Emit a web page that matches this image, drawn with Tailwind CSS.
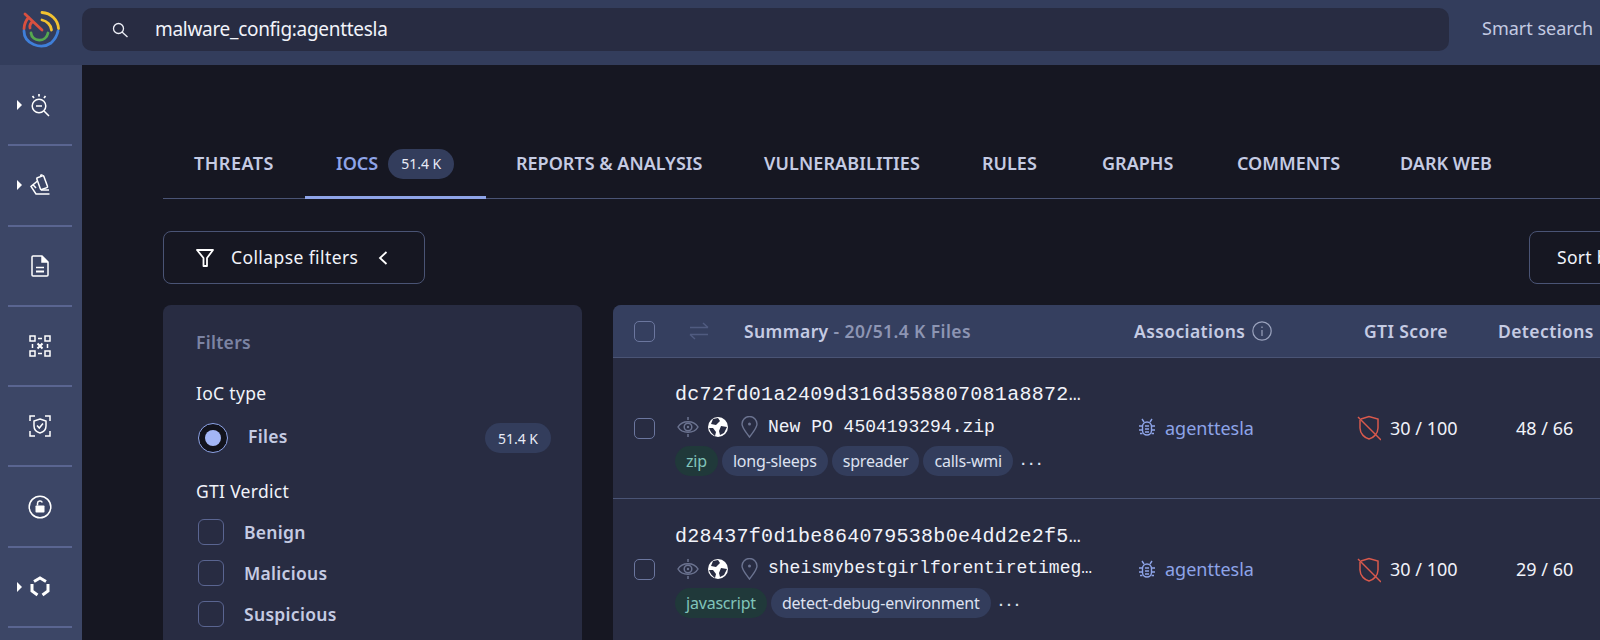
<!DOCTYPE html>
<html lang="en">
<head>
    <meta charset="UTF-8" />
    <title>IOCs | malware_config:agenttesla</title>
    <script src="https://cdn.jsdelivr.net/npm/@tailwindcss/browser@4"></script>
</head>
<body class="h-[640px] w-[1600px] overflow-hidden bg-[#161722] font-['Noto_Sans',sans-serif]">
    <!-- Top bar -->
    <header class="flex h-[65px] items-start bg-[#333d5c]">
        <div class="mt-[9px] flex w-[82px] shrink-0 justify-center">
            <svg width="40" height="40" viewBox="20 9 40 40" fill="none" stroke-width="2.8" stroke-linecap="round">
                <path d="M27.500 17.500 A18 18 0 0 0 23 29" stroke="#d9503f"/>
                <path d="M24 14 L41 30 M32 21.500 C29.500 23 28.500 25.500 29 28" stroke="#d9503f"/>
                <path d="M41 12.500 C50 13 57 20 57.500 28.500" stroke="#f2c230"/>
                <path d="M41 20 C46 21 50 25 50.500 30" stroke="#f2c230"/>
                <path d="M30 33 C31 42 45 43 47 33" stroke="#56a94f"/>
                <path d="M23 31 C23 44 40 50 50 43" stroke="#3f7fd9"/>
                <path d="M51 42 C54 39 56 36 57 31" stroke="#3f7fd9"/>
            </svg>
        </div>
        <div class="mt-[8px] flex h-[43px] w-[1367px] shrink-0 items-center rounded-[10px] bg-[#282c42] pl-[30px]">
            <svg width="16" height="16" viewBox="0 0 16 16" fill="none" stroke="#eef0f7" stroke-width="1.300">
                <circle cx="6.500" cy="6.500" r="5"/>
                <path d="M10 10 L15.500 15"/>
            </svg>
            <span class="ml-[27px] text-[19px] tracking-[-0.3px] text-[#f1f3fa]">malware_config:agenttesla</span>
        </div>
        <span class="ml-[33px] mt-[15px] whitespace-nowrap text-[18px] text-[#c3cae2]">Smart search</span>
    </header>

    <div class="flex h-[575px]">
        <!-- Left rail -->
        <aside class="flex w-[82px] shrink-0 flex-col bg-[#3c4666] pl-[8px] pr-[10px] pt-[1px]">
            <div class="relative flex h-[80.3px] shrink-0 items-center justify-center border-b-2 border-[#5a6591]">
                <span class="absolute left-[9px] top-[34px] h-0 w-0 border-y-[5px] border-l-[5px] border-y-transparent border-l-white"></span>
                <svg width="20" height="24" viewBox="0 0 20 24" fill="none" stroke="white" stroke-width="1.500">
                    <circle cx="9" cy="13" r="6.800"/><path d="M6 13 H12 M14 18 L19 23"/>
                    <path d="M9 1 V3.500 M2.500 3 L4 5 M15.500 3 L14 5" stroke-width="1.700"/>
                </svg>
            </div>
            <div class="relative flex h-[80.3px] shrink-0 items-center justify-center border-b-2 border-[#5a6591]">
                <span class="absolute left-[9px] top-[34px] h-0 w-0 border-y-[5px] border-l-[5px] border-y-transparent border-l-white"></span>
                <svg width="20" height="22" viewBox="0 0 20 22" fill="none" stroke="white" stroke-width="1.500">
                    <rect x="8.500" y="2.500" width="7.500" height="12.500" rx="1" transform="rotate(-20 12 9)"/>
                    <path d="M10 1.500 L12.500 0.800"/>
                    <path d="M7.500 7 L1 12.500 L6 20 H19.500"/>
                    <path d="M3 10.800 L6 14 M11 16 L19 16"/>
                </svg>
            </div>
            <div class="flex h-[80.3px] shrink-0 items-center justify-center border-b-2 border-[#5a6591]">
                <svg width="18" height="22" viewBox="0 0 18 22" fill="none" stroke="white" stroke-width="1.500">
                    <path d="M2 1 H11 L17 7 V20 A1 1 0 0 1 16 21 H2 A1 1 0 0 1 1 20 V2 A1 1 0 0 1 2 1 Z"/>
                    <path d="M11 1 V7 H17" fill="white"/>
                    <path d="M5 12.500 H13"/><path d="M5 16.500 H13" stroke-width="2"/>
                </svg>
            </div>
            <div class="flex h-[80.3px] shrink-0 items-center justify-center border-b-2 border-[#5a6591]">
                <svg width="22" height="22" viewBox="0 0 22 22" fill="none" stroke="white" stroke-width="1.500">
                    <rect x="1" y="1" width="5" height="5"/><rect x="16" y="1" width="5" height="5"/>
                    <rect x="1" y="16" width="5" height="5"/><rect x="16" y="16" width="5" height="5"/>
                    <path d="M9 3.500 H13 M9 18.500 H13 M3.500 9 V13 M18.500 9 V13"/>
                    <path d="M8.500 8.500 L13.500 13.500 M13.500 8.500 L8.500 13.500" stroke-width="2"/>
                </svg>
            </div>
            <div class="flex h-[80.3px] shrink-0 items-center justify-center border-b-2 border-[#5a6591]">
                <svg width="22" height="22" viewBox="0 0 22 22" fill="none" stroke="white" stroke-width="1.500">
                    <path d="M1 6 V1 H6 M16 1 H21 V6 M21 16 V21 H16 M6 21 H1 V16"/>
                    <path d="M11 4 L17 6 V11 C17 14.500 14.500 17 11 18 C7.500 17 5 14.500 5 11 V6 Z"/>
                    <path d="M8 10.500 L10.300 13 L14 8.500"/>
                </svg>
            </div>
            <div class="flex h-[80.3px] shrink-0 items-center justify-center border-b-2 border-[#5a6591]">
                <svg width="24" height="24" viewBox="0 0 24 24" fill="none" stroke="white" stroke-width="1.500">
                    <circle cx="12" cy="12" r="10.800"/>
                    <rect x="7.500" y="10.500" width="9" height="7" rx="0.800" fill="white" stroke="none"/>
                    <path d="M9.500 10.500 V8.500 A2.500 2.500 0 0 1 14.300 7.500"/>
                </svg>
            </div>
            <div class="relative flex h-[80.3px] shrink-0 items-center justify-center border-b-2 border-[#5a6591]">
                <span class="absolute left-[9px] top-[34px] h-0 w-0 border-y-[5px] border-l-[5px] border-y-transparent border-l-white"></span>
                <svg width="20" height="22" viewBox="0 0 20 22" fill="none" stroke="white" stroke-width="3">
                    <path d="M4 5.500 L10 2 L16 5.500 M18 8 V15 L12.500 19 M7.500 19 L2 15 V8"/>
                </svg>
            </div>
        </aside>

        <!-- Main column -->
        <main class="w-[1518px] shrink-0 overflow-hidden pl-[81px] pt-[68px]">
            <!-- Tabs -->
            <nav class="flex h-[66px] w-[1437px] items-center border-b border-[#4a5475] pb-[4px] pl-[31px] text-[18px] font-semibold text-[#c5cbe3]">
                <a class="w-[111px] whitespace-nowrap tracking-[0.5px]">THREATS</a>
                <a class="relative flex h-[61px] w-[181px] items-center pl-[31px] text-[#8ea4e8]">
                    IOCS
                    <span class="ml-[10px] flex h-[30px] w-[66px] items-center justify-center rounded-full bg-[#333d5c] text-[14px] font-normal text-[#e8ebf6]">51.4 K</span>
                    <span class="absolute bottom-[-5px] left-0 h-[3px] w-full bg-[#8ea4e8]"></span>
                </a>
                <a class="ml-[30px] w-[248px] whitespace-nowrap">REPORTS &amp; ANALYSIS</a>
                <a class="w-[218px] whitespace-nowrap tracking-[0.1px]">VULNERABILITIES</a>
                <a class="w-[120px] whitespace-nowrap">RULES</a>
                <a class="w-[135px] whitespace-nowrap">GRAPHS</a>
                <a class="w-[163px] whitespace-nowrap">COMMENTS</a>
                <a class="whitespace-nowrap">DARK WEB</a>
            </nav>

            <!-- Toolbar -->
            <div class="mt-[32px] flex h-[53px] w-[1566px] justify-between">
                <button class="flex w-[262px] items-center rounded-[8px] border border-[#4a5475] pl-[32px] text-[17.500px] tracking-[0.4px] text-[#f1f3fa]">
                    <svg width="18" height="20" viewBox="0 0 18 20" fill="none" stroke="white" stroke-width="1.800" stroke-linejoin="round">
                        <path d="M1 2 H17 L11 10 V18 H7.500 V10 Z"/>
                    </svg>
                    <span class="ml-[17px] whitespace-nowrap">Collapse filters</span>
                    <svg class="ml-[20px]" width="10" height="16" viewBox="0 0 10 16" fill="none" stroke="white" stroke-width="1.800">
                        <path d="M8.500 2 L2 8 L8.500 14"/>
                    </svg>
                </button>
                <button class="flex w-[200px] items-center rounded-[8px] border border-[#4a5475] pl-[27px] text-[17.500px] tracking-[0.3px] text-[#f1f3fa]">
                    <span class="whitespace-nowrap">Sort by</span>
                </button>
            </div>

            <div class="mt-[21px] flex gap-[31px]">
                <!-- Filter panel -->
                <section class="h-[400px] w-[419px] shrink-0 rounded-t-[8px] bg-[#282c42] pl-[33px] pr-[31px] pt-[23px] text-[17.500px] tracking-[0.3px]">
                    <h2 class="font-semibold leading-[28px] text-[#7c84a3]">Filters</h2>
                    <h3 class="mt-[24px] leading-[26px] text-[#f1f3fa]">IoC type</h3>
                    <div class="mt-[16px] flex h-[32px] items-center">
                        <span class="ml-[2px] flex h-[30px] w-[30px] items-center justify-center rounded-full border border-[#8ea4e8] bg-[#12131c]">
                            <span class="h-[16px] w-[16px] rounded-full bg-[#a3b6f5]"></span>
                        </span>
                        <span class="ml-[20px] pb-[3px] font-semibold text-[#c5cbe3]">Files</span>
                        <span class="ml-auto flex h-[30px] w-[66px] items-center justify-center rounded-full bg-[#333d5c] text-[14px] tracking-normal text-[#e8ebf6]">51.4 K</span>
                    </div>
                    <h3 class="mt-[24px] leading-[26px] text-[#f1f3fa]">GTI Verdict</h3>
                    <div class="mt-[15px] flex flex-col gap-[15px] pl-[2px]">
                        <label class="flex h-[26px] items-center">
                            <span class="h-[26px] w-[26px] rounded-[6px] border border-[#5a6591]"></span>
                            <span class="ml-[20px] font-semibold text-[#c5cbe3]">Benign</span>
                        </label>
                        <label class="flex h-[26px] items-center">
                            <span class="h-[26px] w-[26px] rounded-[6px] border border-[#5a6591]"></span>
                            <span class="ml-[20px] font-semibold text-[#c5cbe3]">Malicious</span>
                        </label>
                        <label class="flex h-[26px] items-center">
                            <span class="h-[26px] w-[26px] rounded-[6px] border border-[#5a6591]"></span>
                            <span class="ml-[20px] font-semibold text-[#c5cbe3]">Suspicious</span>
                        </label>
                    </div>
                </section>

                <!-- Results table -->
                <section class="w-[1100px] shrink-0 overflow-hidden rounded-t-[8px] bg-[#282c42]">
                    <div class="grid h-[53px] grid-cols-[62px_459px_223px_141px_1fr] items-center border-b border-[#4a5475] bg-[#353f5f] text-[17.500px] font-semibold tracking-[0.4px] text-[#c5cbe3]">
                        <span class="ml-[21px] h-[21px] w-[21px] rounded-[5px] border border-[#6b769e]"></span>
                        <div class="flex items-center">
                            <svg class="ml-[14px]" width="20" height="18" viewBox="0 0 20 18" fill="none" stroke="#505b80" stroke-width="1.500">
                                <path d="M1 5.500 H19 M14 1 L19 5.500 M19 12.500 H1 M6 17 L1 12.500"/>
                            </svg>
                            <span class="ml-[35px] whitespace-nowrap">Summary <span class="text-[#8d95b3]">- 20/51.4 K Files</span></span>
                        </div>
                        <div class="flex items-center">
                            <span>Associations</span>
                            <svg class="ml-[7px]" width="20" height="20" viewBox="0 0 20 20" fill="none" stroke="#9aa2bd" stroke-width="1.200">
                                <circle cx="10" cy="10" r="9.200"/><path d="M10 9 V15 M10 5.500 V7"/>
                            </svg>
                        </div>
                        <span class="pl-[7px] whitespace-nowrap">GTI Score</span>
                        <span class="whitespace-nowrap">Detections</span>
                    </div>

                    <!-- Row 1 -->
                    <div class="grid h-[141px] grid-cols-[62px_459px_223px_141px_1fr] items-center border-b border-[#4a5475]">
                        <span class="ml-[21px] h-[21px] w-[21px] rounded-[5px] border border-[#6b769e]"></span>
                        <div class="flex flex-col pt-[3px]">
                            <div class="font-['Liberation_Mono',monospace] text-[20px] leading-[24px] tracking-[0.3px] text-[#f1f3fa]">dc72fd01a2409d316d358807081a8872…</div>
                            <div class="mt-[8px] flex h-[24px] items-center">
                                <svg class="ml-[2px]" width="22" height="22" viewBox="0 0 22 22" fill="none" stroke="#6b7390" stroke-width="1.500">
                                    <path d="M1 11 C5 4 17 4 21 11 C17 18 5 18 1 11 Z"/><circle cx="11" cy="11" r="3.800"/><circle cx="11" cy="11" r="1.200" fill="#6b7390" stroke="none"/>
                                    <path d="M11 1 V4 M11 18 V21"/>
                                </svg>
                                <svg class="ml-[8px]" width="22" height="22" viewBox="0 0 22 22">
                                    <circle cx="11" cy="11" r="10" fill="white"/>
                                    <path d="M6 3 L11 2 L13 5 L9 9 L4 8 Z M14 10 L20 11 L17 17 L13 19 L12 15 Z M2 12 L6 12 L9 16 L8 20 C5 18 3 15 2 12 Z" fill="#282c42"/>
                                </svg>
                                <svg class="ml-[12px]" width="17" height="22" viewBox="0 0 17 22" fill="none" stroke="#6b7390" stroke-width="1.400">
                                    <path d="M8.500 21 C5 16 1 12 1 8 A7.500 7.500 0 0 1 16 8 C16 12 12 16 8.500 21 Z"/><circle cx="8.500" cy="8" r="1.500" fill="#6b7390" stroke="none"/>
                                </svg>
                                <span class="ml-[10px] whitespace-nowrap font-['Liberation_Mono',monospace] text-[18px] text-[#f1f3fa]">New PO 4504193294.zip</span>
                            </div>
                            <div class="mt-[7px] flex h-[30px] items-center gap-[4px] text-[16px] tracking-[-0.2px]">
                                <span class="flex h-[30px] items-center rounded-full bg-[#20393a] px-[11px] text-[#80c4ba]">zip</span>
                                <span class="flex h-[30px] items-center rounded-full bg-[#333d5c] px-[11px] text-[#dde1f0]">long-sleeps</span>
                                <span class="flex h-[30px] items-center rounded-full bg-[#333d5c] px-[11px] text-[#dde1f0]">spreader</span>
                                <span class="flex h-[30px] items-center rounded-full bg-[#333d5c] px-[11px] text-[#dde1f0]">calls-wmi</span>
                                <span class="ml-[2px] font-['Liberation_Mono',monospace] text-[14px] font-bold tracking-[-0.4px] text-[#dde1f0]">...</span>
                            </div>
                        </div>
                        <a class="flex items-center pl-[4px] text-[18px] text-[#8ea4e8]">
                            <svg width="18" height="20" viewBox="0 0 18 20" fill="none" stroke="#8ea4e8" stroke-width="1.400">
                                <rect x="4.500" y="4" width="9" height="13" rx="4.500"/>
                                <path d="M6 4 L4 1 M12 4 L14 1 M4.500 8 H1 M4.500 12 H1 M4.500 15.500 H2 M13.500 8 H17 M13.500 12 H17 M13.500 15.500 H16 M7 8 H11 M7 11 H11 M7 14 H11"/>
                            </svg>
                            <span class="ml-[9px]">agenttesla</span>
                        </a>
                        <div class="flex items-center text-[18px] text-[#f1f3fa]">
                            <svg width="24" height="26" viewBox="0 0 24 26" fill="none" stroke="#d9594c" stroke-width="1.500">
                                <path d="M4 4 L12 1.500 L21 4 V13 C21 19 16 23 12 24 C8 23 3 19 3 13 V5"/><path d="M1 2 L24 25"/>
                            </svg>
                            <span class="ml-[9px]">30 / 100</span>
                        </div>
                        <span class="pl-[18px] text-[18px] text-[#f1f3fa]">48 / 66</span>
                    </div>

                    <!-- Row 2 -->
                    <div class="grid h-[142px] grid-cols-[62px_459px_223px_141px_1fr] items-center border-b border-[#4a5475]">
                        <span class="ml-[21px] h-[21px] w-[21px] rounded-[5px] border border-[#6b769e]"></span>
                        <div class="flex flex-col pt-[3px]">
                            <div class="font-['Liberation_Mono',monospace] text-[20px] leading-[24px] tracking-[0.3px] text-[#f1f3fa]">d28437f0d1be864079538b0e4dd2e2f5…</div>
                            <div class="mt-[8px] flex h-[24px] items-center">
                                <svg class="ml-[2px]" width="22" height="22" viewBox="0 0 22 22" fill="none" stroke="#6b7390" stroke-width="1.500">
                                    <path d="M1 11 C5 4 17 4 21 11 C17 18 5 18 1 11 Z"/><circle cx="11" cy="11" r="3.800"/><circle cx="11" cy="11" r="1.200" fill="#6b7390" stroke="none"/>
                                    <path d="M11 1 V4 M11 18 V21"/>
                                </svg>
                                <svg class="ml-[8px]" width="22" height="22" viewBox="0 0 22 22">
                                    <circle cx="11" cy="11" r="10" fill="white"/>
                                    <path d="M6 3 L11 2 L13 5 L9 9 L4 8 Z M14 10 L20 11 L17 17 L13 19 L12 15 Z M2 12 L6 12 L9 16 L8 20 C5 18 3 15 2 12 Z" fill="#282c42"/>
                                </svg>
                                <svg class="ml-[12px]" width="17" height="22" viewBox="0 0 17 22" fill="none" stroke="#6b7390" stroke-width="1.400">
                                    <path d="M8.500 21 C5 16 1 12 1 8 A7.500 7.500 0 0 1 16 8 C16 12 12 16 8.500 21 Z"/><circle cx="8.500" cy="8" r="1.500" fill="#6b7390" stroke="none"/>
                                </svg>
                                <span class="ml-[10px] whitespace-nowrap font-['Liberation_Mono',monospace] text-[18px] text-[#f1f3fa]">sheismybestgirlforentiretimeg…</span>
                            </div>
                            <div class="mt-[7px] flex h-[30px] items-center gap-[4px] text-[16px] tracking-[-0.2px]">
                                <span class="flex h-[30px] items-center rounded-full bg-[#20393a] px-[11px] text-[#80c4ba]">javascript</span>
                                <span class="flex h-[30px] items-center rounded-full bg-[#333d5c] px-[11px] text-[#dde1f0]">detect-debug-environment</span>
                                <span class="ml-[2px] font-['Liberation_Mono',monospace] text-[14px] font-bold tracking-[-0.4px] text-[#dde1f0]">...</span>
                            </div>
                        </div>
                        <a class="flex items-center pl-[4px] text-[18px] text-[#8ea4e8]">
                            <svg width="18" height="20" viewBox="0 0 18 20" fill="none" stroke="#8ea4e8" stroke-width="1.400">
                                <rect x="4.500" y="4" width="9" height="13" rx="4.500"/>
                                <path d="M6 4 L4 1 M12 4 L14 1 M4.500 8 H1 M4.500 12 H1 M4.500 15.500 H2 M13.500 8 H17 M13.500 12 H17 M13.500 15.500 H16 M7 8 H11 M7 11 H11 M7 14 H11"/>
                            </svg>
                            <span class="ml-[9px]">agenttesla</span>
                        </a>
                        <div class="flex items-center text-[18px] text-[#f1f3fa]">
                            <svg width="24" height="26" viewBox="0 0 24 26" fill="none" stroke="#d9594c" stroke-width="1.500">
                                <path d="M4 4 L12 1.500 L21 4 V13 C21 19 16 23 12 24 C8 23 3 19 3 13 V5"/><path d="M1 2 L24 25"/>
                            </svg>
                            <span class="ml-[9px]">30 / 100</span>
                        </div>
                        <span class="pl-[18px] text-[18px] text-[#f1f3fa]">29 / 60</span>
                    </div>
                </section>
            </div>
        </main>
    </div>
</body>
</html>
